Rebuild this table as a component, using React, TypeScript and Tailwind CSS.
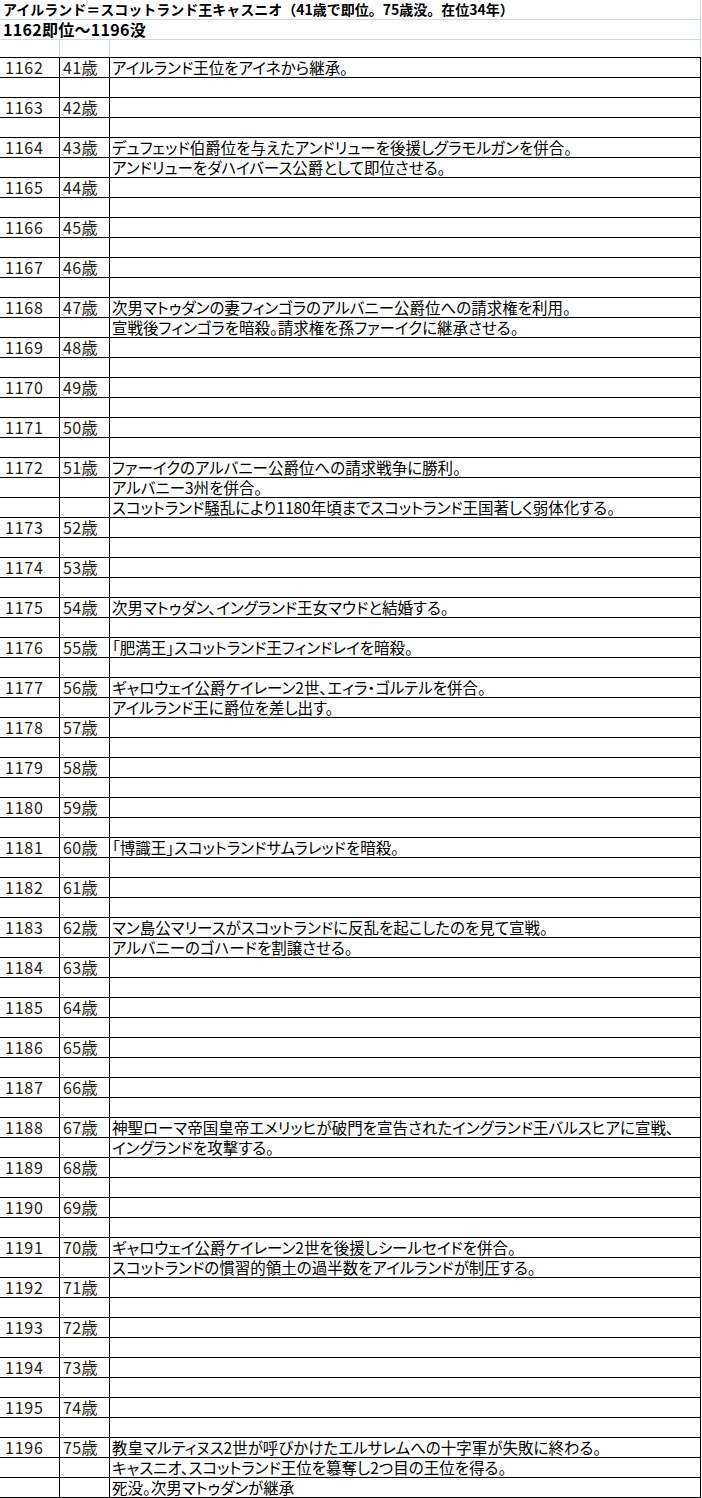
import React from "react";

type Row = { y?: string; a?: string; t?: string };

const events: Record<number, string[]> = {
  1162: ["アイルランド王位をアイネから継承。", ""],
  1164: [
    "デュフェッド伯爵位を与えたアンドリューを後援しグラモルガンを併合。",
    "アンドリューをダハイバース公爵として即位させる。",
  ],
  1168: [
    "次男マトゥダンの妻フィンゴラのアルバニー公爵位への請求権を利用。",
    "宣戦後フィンゴラを暗殺。請求権を孫ファーイクに継承させる。",
  ],
  1172: [
    "ファーイクのアルバニー公爵位への請求戦争に勝利。",
    "アルバニー3州を併合。",
    "スコットランド騒乱により1180年頃までスコットランド王国著しく弱体化する。",
  ],
  1175: ["次男マトゥダン、イングランド王女マウドと結婚する。", ""],
  1176: ["「肥満王」スコットランド王フィンドレイを暗殺。", ""],
  1177: ["ギャロウェイ公爵ケイレーン2世、エィラ・ゴルテルを併合。", "アイルランド王に爵位を差し出す。"],
  1181: ["「博識王」スコットランドサムラレッドを暗殺。", ""],
  1183: [
    "マン島公マリースがスコットランドに反乱を起こしたのを見て宣戦。",
    "アルバニーのゴハードを割譲させる。",
  ],
  1188: [
    "神聖ローマ帝国皇帝エメリッヒが破門を宣告されたイングランド王バルスヒアに宣戦、",
    "イングランドを攻撃する。",
  ],
  1191: [
    "ギャロウェイ公爵ケイレーン2世を後援しシールセイドを併合。",
    "スコットランドの慣習的領土の過半数をアイルランドが制圧する。",
  ],
  1196: [
    "教皇マルティヌス2世が呼びかけたエルサレムへの十字軍が失敗に終わる。",
    "キャスニオ、スコットランド王位を簒奪し2つ目の王位を得る。",
    "死没。次男マトゥダンが継承",
  ],
};

const rows: Row[] = [];
for (let y = 1162; y <= 1196; y++) {
  const ev = events[y] ?? ["", ""];
  ev.forEach((t, i) => {
    if (i === 0) rows.push({ y: String(y), a: `${y - 1121}歳`, t });
    else rows.push({ t });
  });
}

const font = "font-['Noto_Sans_CJK_JP',sans-serif]";

export default function App() {
  return (
    <div className={`w-[702px] h-[1498px] bg-white overflow-hidden text-black ${font}`}>
      <div className="h-[20px] border-b border-r border-[#d0d7e5] w-[701px] flex items-end pl-[3px] text-[14px] font-bold leading-[19px] whitespace-nowrap">
        アイルランド＝スコットランド王キャスニオ（41歳で即位。75歳没。在位34年）
      </div>
      <div className="h-[20px] border-b border-r border-[#d0d7e5] w-[701px] flex items-end pl-[3px] text-[16px] font-bold leading-[19px] whitespace-nowrap tracking-[0.3px]">
        1162即位～1196没
      </div>
      <div className="h-[17px] w-[701px] grid grid-cols-[60px_50px_1fr]">
        <div className="border-r border-[#d0d7e5]" />
        <div className="border-r border-[#d0d7e5]" />
        <div className="border-r border-[#d0d7e5]" />
      </div>
      <div className="w-[701px] border-t border-r border-black">
        {rows.map((r, i) => (
          <div
            key={i}
            className="h-[20px] border-b border-black grid grid-cols-[60px_50px_1fr] leading-[19px]"
          >
            <div className="border-r border-black pl-[5px] text-[16px] tracking-[0.8px] text-[#1e1a14] whitespace-nowrap">{r.y ?? ""}</div>
            <div className="border-r border-black pl-[3px] text-[16px] tracking-[0.4px] text-[#1e1a14] whitespace-nowrap">{r.a ?? ""}</div>
            <div className="pl-[2px] text-[15.5px] whitespace-nowrap [font-feature-settings:'palt']">{r.t ?? ""}</div>
          </div>
        ))}
      </div>
    </div>
  );
}
